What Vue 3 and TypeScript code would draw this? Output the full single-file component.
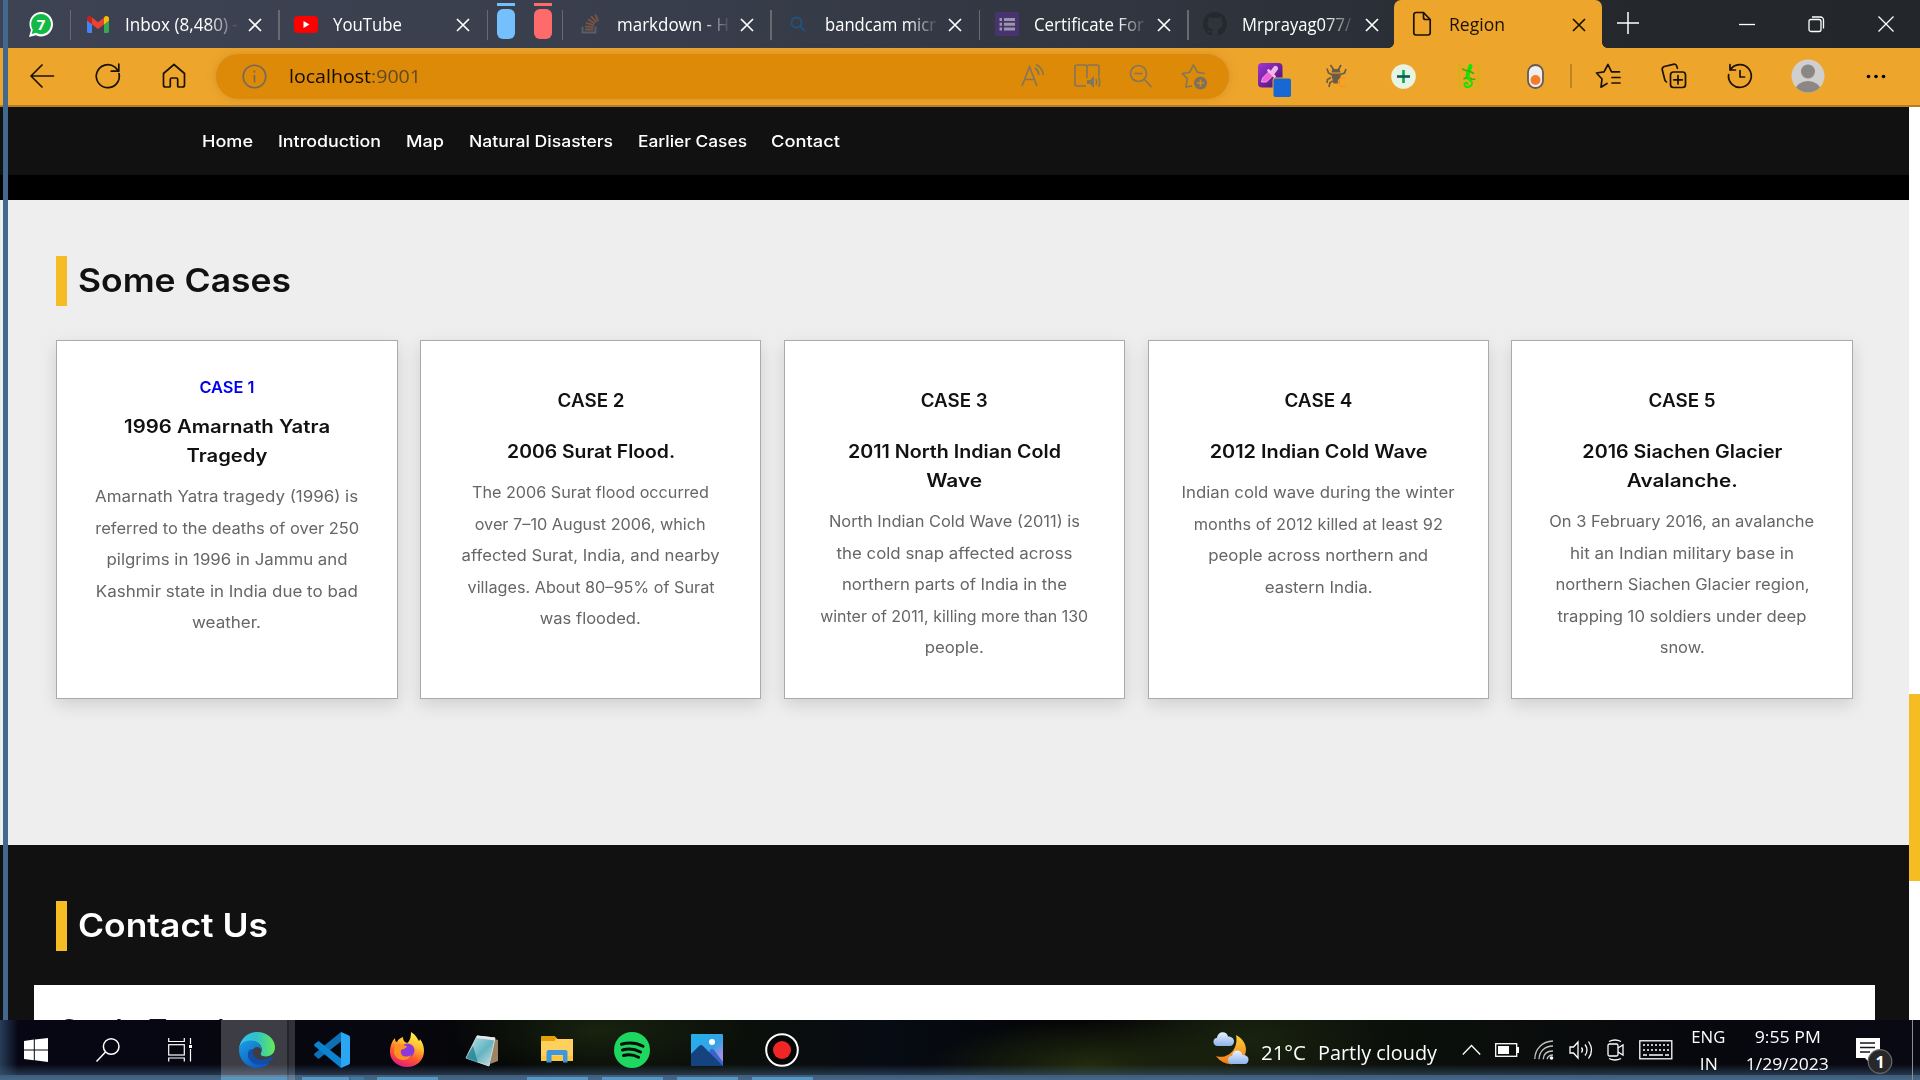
<script setup lang="ts">
import type { Directive } from 'vue'

interface Line { t: string; w: number }
interface Case { label: Line; title: Line[]; body: Line[]; link?: boolean }
interface Tab { icon: string; text: string; w: number; active?: boolean }

const l = (t: string, w: number): Line => ({ t, w })

const vFit: Directive<HTMLElement, number> = {
  mounted(el, { value }) {
    const natural = el.getBoundingClientRect().width
    if (natural > 0) el.style.transform = `scaleX(${value / natural})`
  },
}

const firstTabs: Tab[] = [
  { icon: 'gmail', text: 'Inbox (8,480) -', w: 113 },
  { icon: 'youtube', text: 'YouTube', w: 69 },
]
const moreTabs: Tab[] = [
  { icon: 'stack', text: 'markdown - H', w: 112 },
  { icon: 'search', text: 'bandcam micr', w: 111 },
  { icon: 'forms', text: 'Certificate For', w: 110 },
  { icon: 'github', text: 'Mrprayag077/', w: 109 },
  { icon: 'page', text: 'Region', w: 56, active: true },
]

const nav: Line[] = [
  l('Home', 51), l('Introduction', 103), l('Map', 38),
  l('Natural Disasters', 144), l('Earlier Cases', 109), l('Contact', 69),
]

const cases: Case[] = [
  {
    link: true,
    label: l('CASE 1', 55),
    title: [l('1996 Amarnath Yatra', 206), l('Tragedy', 81)],
    body: [l('Amarnath Yatra tragedy (1996) is', 263), l('referred to the deaths of over 250', 264), l('pilgrims in 1996 in Jammu and', 241), l('Kashmir state in India due to bad', 262), l('weather.', 69)],
  },
  {
    label: l('CASE 2', 67),
    title: [l('2006 Surat Flood.', 168)],
    body: [l('The 2006 Surat flood occurred', 237), l('over 7–10 August 2006, which', 231), l('affected Surat, India, and nearby', 258), l('villages. About 80–95% of Surat', 247), l('was flooded.', 101)],
  },
  {
    label: l('CASE 3', 67),
    title: [l('2011 North Indian Cold', 213), l('Wave', 56)],
    body: [l('North Indian Cold Wave (2011) is', 251), l('the cold snap affected across', 236), l('northern parts of India in the', 225), l('winter of 2011, killing more than 130', 268), l('people.', 59)],
  },
  {
    label: l('CASE 4', 68),
    title: [l('2012 Indian Cold Wave', 218)],
    body: [l('Indian cold wave during the winter', 273), l('months of 2012 killed at least 92', 249), l('people across northern and', 220), l('eastern India.', 108)],
  },
  {
    label: l('CASE 5', 67),
    title: [l('2016 Siachen Glacier', 200), l('Avalanche.', 111)],
    body: [l('On 3 February 2016, an avalanche', 265), l('hit an Indian military base in', 224), l('northern Siachen Glacier region,', 254), l('trapping 10 soldiers under deep', 249), l('snow.', 45)],
  },
]
</script>

<template>
  <div class="screen">
    <header class="tabs">
      <div class="pinned">
        <svg width="24" height="25" viewBox="0 0 24 25">
          <path d="M12 0C5.500 0 0.500 5.200 0.500 12c0 2.200.5 4.200 1.500 6L0 25l7-1.800c1.500.8 3.200 1.200 5 1.200 6.700 0 12-5.400 12-12.200S18.700 0 12 0z" fill="#fff" />
          <path d="M12 2C6.500 2 2.200 6.500 2.200 12.200c0 2 .6 3.900 1.600 5.500L2.600 22l4.600-1.200c1.400.9 3.100 1.400 4.900 1.400 5.600 0 9.900-4.500 9.900-10.100S17.600 2 12 2z" fill="#12b944" />
          <text x="12" y="18" class="wa">7</text>
        </svg>
      </div>
      <template v-for="(group, gi) in [firstTabs, moreTabs]" :key="gi">
        <div v-if="gi === 1" class="groups"><i class="g blue"></i><i class="g red"></i></div>
        <div v-for="tab in group" :key="tab.text" class="tab" :class="{ active: tab.active }">
          <div class="tab-icon">
            <svg v-if="tab.icon === 'gmail'" width="22" height="17" viewBox="0 0 22 17">
              <path d="M0 3v12.500c0 .8.600 1.500 1.500 1.500H5V7z" fill="#4285f4" /><path d="M22 3v12.500c0 .8-.6 1.500-1.500 1.500H17V7z" fill="#34a853" />
              <path d="M17 2v6.500l5-4V2.500C22 .3 19.500-.8 17.700.6z" fill="#fbbc04" /><path d="M5 8.500V1.500l6 4.800 6-4.800v7L11 13z" fill="#ea4335" /><path d="M0 2.500v2l5 4v-7L4.300.6C2.500-.8 0 .3 0 2.500z" fill="#c5221f" />
            </svg>
            <svg v-else-if="tab.icon === 'youtube'" width="24" height="17" viewBox="0 0 24 17"><rect width="24" height="17" rx="4" fill="#f00" /><path d="M9.500 5v7l6-3.500z" fill="#fff" /></svg>
            <svg v-else-if="tab.icon === 'stack'" width="20" height="20" viewBox="0 0 20 20" fill="none" stroke-width="1.800">
              <path d="M2.500 12.500v6h13v-6" stroke="#5a6069" /><path d="M5 15.500h8.500M5.200 12.300l8.300.9M6 8.800l8 2.300M8 5.200l7 4.200M11 2.200l5.500 6M15.200.5l3 6.500" stroke="#7c5440" />
            </svg>
            <svg v-else-if="tab.icon === 'search'" width="16" height="16" viewBox="0 0 16 16" fill="none" stroke="#23527c" stroke-width="2"><circle cx="6.500" cy="6.500" r="5" /><path d="M10 10l5 5" /></svg>
            <svg v-else-if="tab.icon === 'forms'" width="24" height="24" viewBox="0 0 24 24"><rect width="24" height="24" rx="1.500" fill="#47346f" /><path d="M4.500 6h2.500v3H4.500zM9 6h11v3H9zM4.500 10.700h2.500v3H4.500zM9 10.700h11v3H9zM4.500 15.400h2.500v3H4.500zM9 15.400h11v3H9z" fill="#9d96aa" /></svg>
            <svg v-else-if="tab.icon === 'github'" width="24" height="24" viewBox="0 0 16 16"><path fill="#24292e" d="M8 0C3.580 0 0 3.580 0 8c0 3.540 2.290 6.530 5.470 7.590.4.070.55-.17.55-.38 0-.19-.01-.82-.01-1.490-2.010.37-2.530-.49-2.690-.94-.09-.23-.48-.94-.82-1.130-.28-.15-.68-.52-.01-.53.63-.01 1.080.58 1.230.82.720 1.210 1.870.87 2.330.66.070-.52.280-.87.510-1.070-1.780-.2-3.640-.89-3.640-3.950 0-.87.310-1.590.82-2.150-.08-.2-.36-1.020.080-2.120 0 0 .67-.21 2.200.82.640-.18 1.320-.27 2-.27s1.360.090 2 .27c1.530-1.040 2.200-.82 2.200-.82.440 1.100.16 1.920.080 2.120.510.560.82 1.270.82 2.150 0 3.070-1.870 3.750-3.650 3.950.290.250.540.730.540 1.480 0 1.070-.01 1.930-.01 2.200 0 .210.150.460.550.380A8.010 8.010 0 0 0 16 8c0-4.420-3.580-8-8-8z" /></svg>
            <svg v-else width="20" height="26" viewBox="0 0 20 26" fill="none" stroke="#1a1205" stroke-width="1.700"><path d="M11.500 1.500H4A2.200 2.200 0 0 0 1.800 3.700v18.100A2.200 2.200 0 0 0 4 24h12a2.200 2.200 0 0 0 2.200-2.200V8.500zM11.500 1.500v5a2 2 0 0 0 2 2h4.700" /></svg>
          </div>
          <div class="tab-text" :class="{ faded: tab.w > 100 }"><span v-fit="tab.w">{{ tab.text }}</span></div>
          <svg class="x" width="14" height="14" viewBox="0 0 14 14"><path d="M1 1l12 12M13 1L1 13" stroke="currentColor" stroke-width="1.700" /></svg>
        </div>
      </template>
      <svg class="plus" width="22" height="22" viewBox="0 0 22 22"><path d="M11 0v22M0 11h22" stroke="#fff" stroke-width="1.500" /></svg>
      <div class="winctl">
        <svg width="16" height="16"><path d="M0 8.500h16" stroke="#fff" stroke-width="1.300" /></svg>
        <svg width="17" height="17" fill="none" stroke="#fff" stroke-width="1.300"><rect x="1" y="3.500" width="12" height="12" rx="2" /><path d="M4 1h8.500a3 3 0 0 1 3 3v8.500" /></svg>
        <svg width="16" height="16"><path d="M.5.5l15 15M15.500.5l-15 15" stroke="#fff" stroke-width="1.300" /></svg>
      </div>
    </header>

    <div class="toolbar">
      <div class="cell"><svg width="24" height="24" viewBox="0 0 24 24" class="ln"><path d="M23.500 12H1M12 1L1 12l11 11" /></svg></div>
      <div class="cell"><svg width="26" height="26" viewBox="0 0 26 26" class="ln"><path d="M24 10.500A11.500 11.500 0 1 1 20 4.200L23.500 8M23.800 1v7.200h-7.500" /></svg></div>
      <div class="cell"><svg width="24" height="26" viewBox="0 0 24 26" class="ln"><path d="M1.500 10.500L12 1.500l10.500 9V22a2 2 0 0 1-2 2h-3.800a1 1 0 0 1-1-1v-6.500a1.500 1.500 0 0 0-1.500-1.500h-4.400a1.500 1.500 0 0 0-1.500 1.500V23a1 1 0 0 1-1 1H3.500a2 2 0 0 1-2-2z" /></svg></div>
      <div class="address">
        <svg width="25" height="25" viewBox="0 0 25 25" fill="none" stroke="#75695a" stroke-width="1.600"><circle cx="12.500" cy="12.500" r="11.300" /><path d="M12.500 11v7.500M12.500 6.500v2" /></svg>
        <div class="url"><span v-fit="132">localhost<em>:9001</em></span></div>
        <div class="addr-icons">
          <svg width="26" height="26" viewBox="0 0 26 26" class="ag"><path d="M2 23L9.500 4 17 23M4.800 16.500h9.500M15 5c2.300 1.500 3.500 3.500 4 7M16 1.500c4.500 2.200 6.800 5.500 7.500 10.500" /></svg>
          <svg width="27" height="26" viewBox="0 0 27 26" class="ag"><path d="M12 23H3a2 2 0 0 1-2-2V4a2 2 0 0 1 2-2h8a2 2 0 0 1 2 2v11M13 4a2 2 0 0 1 2-2h8a2 2 0 0 1 2 2v9" /><path d="M13 17h3l4-4v12l-4-4h-3z" fill="#81765c" stroke="none" /><path d="M22 16q1.500 3 0 6M24.500 14q2.500 5 0 10" /></svg>
          <svg width="24" height="24" viewBox="0 0 24 24" class="ag"><circle cx="9.500" cy="9.500" r="8" /><path d="M15.500 15.500L22.500 23M5.500 9.500h8" /></svg>
          <svg width="27" height="27" viewBox="0 0 27 27" class="ag"><path d="M11 23l-6 1 1.200-8.200L1.500 10.500 8.700 9.200 12.500 2l3.800 7.200 7.500 1.300" /><circle cx="19.500" cy="20" r="6.500" fill="#7b715e" stroke="none" /><path d="M19.500 16.500v7M16 20h7" stroke="#dc8a08" /></svg>
        </div>
      </div>
      <div class="exts">
        <div class="cell first"><svg width="34" height="34" viewBox="0 0 34 34"><defs><linearGradient id="pp" x2="1" y2="1"><stop stop-color="#a233d8" /><stop offset="1" stop-color="#42146b" /></linearGradient></defs><rect x="0" y="0" width="24.500" height="24.500" rx="4" fill="url(#pp)" /><path d="M3.500 19l1-4 7-7 4 4-7 7z" fill="#f25fd8" stroke="#f59be6" stroke-width="1" /><path d="M10.500 7.500l6 6" stroke="#f9c3f0" stroke-width="2.600" stroke-linecap="round" /><path d="M14.500 9.500l3-4" stroke="#f3b5ea" stroke-width="5" stroke-linecap="round" /><rect x="14.500" y="14.500" width="19.500" height="20" rx="3" fill="#eea52c" /><rect x="15.500" y="15.500" width="17.500" height="18.500" rx="2" fill="#1767d5" /></svg></div>
        <div class="cell"><svg width="22" height="24" viewBox="0 0 22 24" fill="none" stroke="#6b5c48" stroke-width="1.700"><path d="M6.500 5h7l1 3.500h-9z" fill="#6b5c48" stroke="none" /><path d="M5 9.500h10l-1.500 10h-6z" fill="#6b5c48" stroke="none" /><path d="M7.500 5.500L4.500 1M12.500 5.500L15 1M5.500 10.500L2.500 9 1 4.500M14.500 10.500L18.500 9l1.500-4M5 13.500l-3.500 2L1 19M7 17l-3 1.500L3 23" /><path d="M19.500 15a4.200 4.200 0 1 0 0 6.500" stroke="#fb971e" stroke-width="2" /></svg></div>
        <div class="cell"><svg width="25" height="25" viewBox="0 0 25 25"><circle cx="12.500" cy="12.500" r="12.300" fill="#e7f3e3" /><path d="M12.500 6v13" stroke="#06a562" stroke-width="2.600" /><path d="M6 12.500h13" stroke="#0a5a55" stroke-width="2.600" /></svg></div>
        <div class="cell"><svg width="24" height="25" viewBox="0 0 24 25" fill="none"><path d="M5 1H2.500v9L1 12.500 2.500 15v9H5M19 1h2.500v9l1.500 2.500-1.500 2.500v9H19" stroke="#c8bc00" stroke-width="1.200" /><path d="M13.500 2l-1 3" stroke="#12e500" stroke-width="4" stroke-linecap="round" /><path d="M12 6.500c-1.800 3-1 4-1.500 7" stroke="#12e500" stroke-width="4" stroke-linecap="round" /><path d="M10.500 13.500c0 2.200 4.500 2.500 4.500 5.500 0 4.500-7.500 5.500-7.500 1.500 0-1.800 3-2.500 3.200-.5" stroke="#12e500" stroke-width="2" stroke-linecap="round" /><path d="M5 5l4 1.500 3 .5 5 2.500M6.500 15l3-1.500M13 13.500l2 2 3.500-.5" stroke="#3eae00" stroke-width="1.500" /></svg></div>
        <div class="cell"><svg width="17" height="25" viewBox="0 0 17 25"><rect x="1" y="1" width="15" height="23" rx="7.500" fill="#f1efed" stroke="#625a57" stroke-width="1.800" /><circle cx="8.500" cy="16" r="5" fill="#f47c2c" /></svg></div>
        <i class="vsep"></i>
        <div class="cell"><svg width="26" height="26" viewBox="0 0 26 26" class="ln"><path d="M12 20.500L6 24.200 7 16 1.500 10l7.500-1.200L13 1.500l3.500 7.300h8M17 14.500h8M17 20h8" /></svg></div>
        <div class="cell"><svg width="26" height="26" viewBox="0 0 26 26" class="ln"><rect x="9.500" y="9" width="15" height="15.500" rx="3" /><path d="M17 12.500v8.500M12.700 16.800h8.600M5.500 19L4 17.500 1.300 7c-.4-1.700.3-3 2-3.500l9-2.200c1.800-.4 3 .3 3.500 2l.6 2" /></svg></div>
        <div class="cell"><svg width="26" height="26" viewBox="0 0 26 26" class="ln"><path d="M3 1.500V7h5.500M3.200 7A11.400 11.400 0 1 1 1.600 11.500M13 7.500V14h4.500" /></svg></div>
        <div class="cell avatar"><svg width="34" height="34" viewBox="0 0 34 34"><clipPath id="av"><circle cx="17" cy="17" r="16.500" /></clipPath><g clip-path="url(#av)"><rect width="34" height="34" fill="#d1cfcd" /><circle cx="17" cy="12.500" r="7" fill="#8a8785" /><ellipse cx="17" cy="31" rx="12.500" ry="9" fill="#8a8785" /></g></svg></div>
        <div class="cell"><svg width="20" height="5"><circle cx="2.500" cy="2.500" r="1.800" /><circle cx="10" cy="2.500" r="1.800" /><circle cx="17.500" cy="2.500" r="1.800" /></svg></div>
      </div>
    </div>

    <div class="viewport">
      <main class="page">
        <nav class="nav"><span v-for="n in nav" :key="n.t" class="slot" :style="{ width: n.w + 'px' }"><span v-fit="n.w" class="left">{{ n.t }}</span></span></nav>
        <div class="strip"></div>
        <section class="cases">
          <h2><span v-fit="213" class="left">Some Cases</span></h2>
          <div class="cards">
            <article v-for="c in cases" :key="c.label.t" class="card" :class="{ link: c.link }">
              <div class="label"><span v-fit="c.label.w">{{ c.label.t }}</span></div>
              <h3><div v-for="t in c.title" :key="t.t"><span v-fit="t.w">{{ t.t }}</span></div></h3>
              <p><span v-for="b in c.body" :key="b.t" class="row"><span v-fit="b.w">{{ b.t }}</span></span></p>
            </article>
          </div>
        </section>
        <section class="contact">
          <h2><span v-fit="190" class="left">Contact Us</span></h2>
          <div class="form"><h4><span v-fit="177" class="left">Get In Touch</span></h4></div>
        </section>
      </main>
      <div class="scrollbar"><i></i></div>
    </div>

    <footer class="taskbar">
      <div class="sys">
        <div><svg width="24" height="24" viewBox="0 0 24 24" fill="#fff"><path d="M0 3l9.800-1.400v9.800H0zM10.800 1.400L24 0v11.400H10.800zM0 12.400h9.800v9.900L0 21zM10.800 12.400H24V24l-13.200-1.700z" /></svg></div>
        <div><svg width="24" height="24" viewBox="0 0 24 24" fill="none" stroke="#fff" stroke-width="1.500"><circle cx="15.200" cy="8.500" r="7.800" /><path d="M9.500 14L.5 23.500" /></svg></div>
        <div><svg width="24" height="24" viewBox="0 0 24 24" fill="none" stroke="#fff" stroke-width="1.200"><path d="M.7 0v3.500h15.600V0M.7 23.500v-3.500h15.600v3.500M22.500 0v6M22.500 11v12.500" /><rect x=".7" y="6.700" width="15.600" height="10.300" /><path d="M21 8.500h3" stroke-width="3" /></svg></div>
      </div>
      <div class="app on"><svg width="36" height="36" viewBox="0 0 36 36"><defs><linearGradient id="e1" x2="1"><stop stop-color="#35c1f1" /><stop offset=".5" stop-color="#2fc2c8" /><stop offset="1" stop-color="#66eb54" /></linearGradient><linearGradient id="e2" x2=".7" y2="1"><stop stop-color="#1b9de2" /><stop offset="1" stop-color="#0c59c0" /></linearGradient></defs>
        <path d="M0 17C1 7 8.500 0 18 0c10.500 0 18 7.500 18 15 0 6-4 9.500-9 9.500-4.500 0-6-1.700-5-3.500 2-3.500.5-11-9-12C7 8.400 2 11.500 0 17z" fill="url(#e1)" /><path d="M0 18c0-6 5.500-9.500 11-9.500 7 0 11.300 4.200 11.300 9-4-5-9.500-1.500-9.500 4 0 8 10 12.500 18.200 9C28 34 23.500 36 18 36 8 36 0 28 0 18z" fill="url(#e2)" /><path d="M14 17c-2 10 8 14 19 7.500 1-.5 1.500.2 1 1C27 38 7 33 9 21c.5-2.500 2.500-4 5-4z" fill="#124ea5" /></svg></div>
      <div class="app multi"><svg width="36" height="36" viewBox="0 0 36 36"><path d="M27 0v9.500L4.500 27 .5 23.500q-.8-1 0-2z" fill="#0e6fb5" /><path d="M4.500 9L27 26.500V36L.5 14q-.8-1 0-2z" fill="#0b83d1" /><path d="M27 0l7.500 3.300q1.500.7 1.500 2V30.700q0 1.300-1.500 2L27 36z" fill="#29a7f3" /></svg></div>
      <div class="app"><svg width="36" height="36" viewBox="0 0 36 36"><defs><linearGradient id="ff" x1=".7" y1="0" x2=".3" y2="1"><stop stop-color="#fff44f" /><stop offset=".35" stop-color="#ffbd2e" /><stop offset=".65" stop-color="#ff5c2b" /><stop offset="1" stop-color="#e31587" /></linearGradient></defs><path d="M22 0c5 3 6 6 8 9 1-1 1-2 1-2 3 4 4 8 4 12 0 9-7 16-17 16S1 28 1 20C1 14 3 9 6 6c0 3 1 4 2 4 1-3 4-4 6-5 0 4 2 5 4 6 3-2 4-6 4-11z" fill="url(#ff)" /><circle cx="18.500" cy="18.500" r="7" fill="#8b39dd" /><path d="M6 13c5-2 9 1 12 1-1 3-4 3-6 4-2 7 6 8 10 5-3 8-15 6-17-2z" fill="#ff9220" /></svg></div>
      <div class="app idle"><svg width="34" height="34" viewBox="0 0 34 34"><defs><linearGradient id="np" x2="1" y2="1"><stop stop-color="#c5e9ec" /><stop offset=".55" stop-color="#63b4c2" /><stop offset="1" stop-color="#d9e3e5" /></linearGradient></defs><path d="M29 6l4 1v21l-8 3z" fill="#9d8462" /><path d="M12 3l18 2-6 28L1 25z" fill="url(#np)" stroke="#d5dde0" /><path d="M12 2.500l18 2v3L12 5z" fill="#e8e8e8" /><path d="M1 25l7-12 5 17z" fill="#167b8f" opacity=".7" /></svg></div>
      <div class="app"><svg width="32" height="28" viewBox="0 0 32 28"><path d="M0 1.500A1.500 1.500 0 0 1 1.500 0h12l3 3H32v22H0z" fill="#ffd15c" /><path d="M0 1.500A1.500 1.500 0 0 1 1.500 0h12l2 2-2 3H0z" fill="#e3a008" /><path d="M0 20h32v5H0z" fill="#fcc63f" /><path d="M5.500 26.500V16a2 2 0 0 1 2-2h17a2 2 0 0 1 2 2v10.500H22V19H10.500v7.500z" fill="#3e97dc" /></svg></div>
      <div class="app"><svg width="36" height="36" viewBox="0 0 36 36"><circle cx="18" cy="18" r="18" fill="#1ed760" /><path d="M7.500 12.300c7-2 15-1.500 21.500 2M8.500 18c6-1.600 12.500-1 18 2M9.500 23.500c5-1.200 10.500-.7 15 1.800" fill="none" stroke="#070d08" stroke-width="3" stroke-linecap="round" /></svg></div>
      <div class="app"><svg width="32" height="32" viewBox="0 0 32 32"><defs><linearGradient id="ph" x2="1" y2="1"><stop stop-color="#22b1ec" /><stop offset=".55" stop-color="#35a2e6" /><stop offset=".8" stop-color="#9e91e6" /></linearGradient></defs><rect width="32" height="32" rx="1" fill="url(#ph)" /><path d="M13 32l6-16q2-2 4 0l9 12v4z" fill="#3b63cb" /><path d="M0 20l8-8q2-2 4 0l20 20H0z" fill="#15437f" /><circle cx="21" cy="8" r="3" fill="#fff" /></svg></div>
      <div class="app"><svg width="34" height="34" viewBox="0 0 34 34"><circle cx="17" cy="17" r="15.800" fill="#050505" stroke="#fff" stroke-width="2" /><circle cx="17" cy="17" r="9" fill="#f02626" /></svg></div>

      <div class="weather">
        <svg width="36" height="34" viewBox="0 0 36 34"><defs><linearGradient id="mo" x2="0" y2="1"><stop stop-color="#ffd03a" /><stop offset="1" stop-color="#f27a15" /></linearGradient><linearGradient id="cl" x2="0" y2="1"><stop stop-color="#e9f2fe" /><stop offset="1" stop-color="#8cb2ee" /></linearGradient></defs><path d="M23 3c8 4 12 12 9 20-4 11-20 13-29 1 12 4 23-7 20-21z" fill="url(#mo)" /><path d="M4 14a4.200 4.200 0 0 1 0-8.300C5-1.500 14-1.500 15 4.500c4 0 6 2.500 6 5S19 14 17 14z" fill="url(#cl)" /><path d="M19 32a4 4 0 0 1 0-8c1-7 9-7 10.500-1 4 0 6 2 6 4.500S34 32 32 32z" fill="url(#cl)" /></svg>
        <div class="deg"><span v-fit="45" class="left">21°C</span></div>
        <div class="cond"><span v-fit="119" class="left">Partly cloudy</span></div>
      </div>
      <div class="tray">
        <svg width="19" height="12" viewBox="0 0 19 12" class="tl"><path d="M.8 10.500L9.500 1.500l8.700 9" /></svg>
        <svg width="24" height="14" viewBox="0 0 24 14" class="tl"><rect x=".7" y=".7" width="21" height="12.600" /><rect x="3" y="3" width="11" height="8" fill="#fff" stroke="none" /><path d="M23 4v6" stroke-width="2" /></svg>
        <svg width="20" height="20" viewBox="0 0 20 20" class="tl"><path d="M.8 19C1 9 8 1.500 19 1M5 19.300C5.300 11.500 10.500 6.200 19 6M9.200 19.300c.2-5 3.800-8.200 9.800-8.300M13.200 19.300c0-2.500 2.300-4.300 5.800-4.300" opacity=".75" /><circle cx="17.500" cy="18" r="1.800" fill="#fff" stroke="none" /></svg>
        <svg width="24" height="20" viewBox="0 0 24 20" class="tl"><path d="M1 7h3.500L9 2v16l-4.500-5H1zM12.500 7.500q2 2.500 0 5M16 4.500q4 5.500 0 11M19.500 1.500q6 8.500 0 17" /></svg>
        <svg width="17" height="22" viewBox="0 0 17 22" class="tl"><rect x="1" y="5" width="10" height="12" rx="1.500" /><path d="M11 9l5-3v10l-5-3M2 2.500q6-3 12 0M2 19.500q6 3 12 0" /></svg>
        <svg width="34" height="20" viewBox="0 0 34 20" class="tl"><rect x=".8" y=".8" width="32" height="18" /><path d="M4 5h26M4 10h26" stroke-dasharray="2 2" /><path d="M4 15h4M10 15h14M26 15h4" /></svg>
      </div>
      <div class="lang"><div><span v-fit="34">ENG</span></div><div><span v-fit="18">IN</span></div></div>
      <div class="clock"><div><span v-fit="66">9:55 PM</span></div><div><span v-fit="83">1/29/2023</span></div></div>
      <div class="notif"><svg width="38" height="38" viewBox="0 0 38 38"><path d="M1 1h24v20H16v6l-6-6H1z" fill="#fff" /><path d="M5 6h15M5 10.500h15M5 15h10" stroke="#16161c" stroke-width="1.500" /><circle cx="25" cy="24.500" r="11.800" fill="#28282b" stroke="#6b6b6d" stroke-width="1.200" /><text x="25" y="30.500" class="badge">1</text></svg></div>
      <i class="peek"></i>
    </footer>
    <i class="window-edge"></i>
  </div>
</template>

<style>
body { margin: 0; overflow: hidden; }
</style>

<style scoped>
.screen { position: relative; width: 1920px; height: 1080px; overflow: hidden; display: flex; flex-direction: column; font-family: "Open Sans", "Noto Sans", sans-serif; }
.screen span { display: inline-block; white-space: nowrap; }
svg { display: block; flex: none; overflow: visible; }
.left { transform-origin: left center; }

.tabs { height: 48px; flex: none; display: flex; align-items: stretch; background: linear-gradient(90deg, #3d4352 0, #393f4d 30%, #30353f 60%, #24272c 85%, #23272b 100%); }
.pinned { width: 40.500px; padding-left: 29px; display: flex; align-items: center; }
.wa { font: bold 15px "Open Sans", sans-serif; fill: #fff; text-anchor: middle; }
.tab { position: relative; width: 208.500px; box-sizing: border-box; display: flex; align-items: center; color: #fff; padding-left: 16px; }
.tab::before, .groups::before { content: ""; position: absolute; left: 0; top: 10px; width: 1.500px; height: 30px; background: #686a6d; }
.tab.active { width: 208px; margin-left: -2px; background: #eea52c; color: #1b1204; border-radius: 7px 7px 0 0; }
.tab.active::before, .tab.active::after { content: ""; position: absolute; left: -5px; top: auto; bottom: 0; width: 5px; height: 5px; background: radial-gradient(circle at 0 0, transparent 4.500px, #eea52c 5px); }
.tab.active::after { left: auto; right: -5px; background: radial-gradient(circle at 100% 0, transparent 4.500px, #eea52c 5px); }
.tab-icon { width: 24px; display: flex; justify-content: center; }
.tab-text { width: 112px; margin: -1px 0 0 15px; font-size: 18px; line-height: 26px; overflow: hidden; }
.tab-text.faded { mask-image: linear-gradient(90deg, #000 74%, rgba(0, 0, 0, .08)); }
.tab-text span { transform-origin: left center; }
.x { margin: 1px 0 0 11px; }
.groups { position: relative; width: 75px; box-sizing: border-box; padding: 9px 0 0 10px; display: flex; gap: 19px; }
.g { position: relative; width: 18px; height: 30px; border-radius: 6px; }
.g::before { content: ""; position: absolute; left: 0; top: -6px; width: 18px; height: 3px; background: inherit; }
.blue { background: #74c0fc; }
.red { background: #ff6b6b; }
.plus { margin: 12px 0 0 15.500px; }
.winctl { margin-left: auto; padding-right: 26px; display: flex; align-items: center; gap: 53px; }

.toolbar { height: 59px; box-sizing: border-box; flex: none; display: flex; align-items: center; padding: 0 9px 1px 9px; background: #eea52c; border-bottom: 2px solid #b57e22; }
.cell { width: 66px; display: flex; justify-content: center; flex: none; }
.cell.first { width: 62px; }
.cell.first svg { margin: 8px 0 0 3px; }
.cell.avatar { width: 70px; }
.ln { fill: none; stroke: #1a1205; stroke-width: 1.700; stroke-linejoin: round; stroke-linecap: round; }
.ag { fill: none; stroke: #81765c; stroke-width: 1.600; }
.address { width: 1013px; height: 45px; box-sizing: border-box; margin: 0 0 0 9px; padding: 0 21px 0 26px; border-radius: 23px; background: #dc8a08; box-shadow: 0 0 8px rgba(190, 125, 40, .5); display: flex; align-items: center; }
.url { margin-left: 22px; font-size: 19px; line-height: 30px; color: #140d01; }
.url span { transform-origin: left center; }
.url em { font-style: normal; color: #624a20; }
.addr-icons { margin-left: auto; display: flex; gap: 28px; align-items: center; }
.exts { display: flex; align-items: center; margin-left: 13px; }
.vsep { width: 2px; height: 24px; margin: 0 3px 0 2px; background: #bd8524; }

.viewport { flex: 1; min-height: 0; display: flex; background: #fff; overflow: hidden; }
.page { width: 1909px; height: 913px; overflow: hidden; font-family: Inter, "Liberation Sans", sans-serif; }
.nav { height: 68px; display: flex; align-items: center; gap: 24.900px; padding-left: 202px; background: #111; color: #fff; font-size: 16px; font-weight: 500; line-height: 24px; }
.slot { height: 24px; }
.strip { height: 25px; background: #000; }
.cases { height: 645px; box-sizing: border-box; padding: 56px 56px 0; background: #eee; }
h2 { margin: 0; height: 50px; line-height: 49px; padding-left: 11px; border-left: 11px solid #f5bd23; font-size: 33px; font-weight: 600; color: #111; }
.cards { display: grid; grid-template-columns: repeat(5, 341.600px); column-gap: 22.250px; margin-top: 34px; }
.card { box-sizing: border-box; height: 359px; border: 1px solid #aaa; padding-top: 48px; background: #fff; text-align: center; box-shadow: 0 6px 16px rgba(0, 0, 0, .13); }
.label { height: 24px; line-height: 24px; margin-bottom: 24px; font-size: 18px; font-weight: 600; color: #111; }
h3 { margin: 0 0 11px; font-size: 18px; line-height: 29px; font-weight: 600; color: #111; }
h3 div { height: 29px; }
p { margin: 0; font-size: 15.500px; color: #666; }
.screen .row { display: block; height: 31.500px; line-height: 31.500px; }
.card.link { padding-top: 34px; }
.link .label { color: #00e; font-size: 16px; margin-bottom: 13px; }
.contact { height: 175px; box-sizing: border-box; padding: 56px 34px 0; background: #111; }
.contact h2 { color: #fff; margin-left: 22px; }
.form { margin-top: 34px; height: 60px; box-sizing: border-box; background: #fff; padding: 27px 0 0 24px; }
h4 { margin: 0; font-size: 29px; line-height: 36px; font-weight: 500; color: #111; }
.scrollbar { flex: 1; background: #fff; padding-top: 587px; }
.scrollbar i { display: block; height: 187px; background: #f5bd23; }

.taskbar { height: 60px; flex: none; display: flex; align-items: stretch; color: #fff; background:
  linear-gradient(180deg, transparent 74%, rgba(62, 91, 121, .55) 91%, #3f5c79 92%, #456889 100%),
  linear-gradient(90deg, #263d58 0, rgba(38, 61, 88, 0) 18px),
  radial-gradient(ellipse 150px 50px at 600px 10px, #18230f, transparent),
  radial-gradient(ellipse 160px 45px at 1090px 45px, #222b0e, transparent),
  radial-gradient(ellipse 130px 55px at 1250px 20px, #19220f, transparent),
  linear-gradient(90deg, #070715 0, #07070f 20%, #050606 27%, #0b0f0a 38%, #070b13 46%, #040507 56%, #10150b 64%, #0b0f0b 75%, #07080d 88%, #090914 100%); }
.sys { display: flex; width: 219.500px; }
.sys div { width: 72px; display: flex; align-items: center; justify-content: center; }
.app { position: relative; width: 75px; display: flex; align-items: center; justify-content: center; flex: none; }
.app::after { content: ""; position: absolute; left: 7px; right: 7px; bottom: 0; height: 3px; background: #5896c4; }
.app.on::before { content: ""; position: absolute; left: 1.500px; right: 0; top: 0; bottom: 0; background: linear-gradient(90deg, rgba(255, 255, 255, .22) 66px, rgba(255, 255, 255, .12) 66px 68px, rgba(255, 255, 255, .17) 68px); }
.app.on svg { position: relative; }
.app.on::after { left: 1.500px; width: 66px; right: auto; }
.app.multi::after { right: 6px; background: linear-gradient(90deg, #5896c4 47px, #456889 47px 49px, #4479a5 49px); }
.app.idle::after { display: none; }
.weather { margin-left: 393px; display: flex; align-items: center; font-size: 20px; line-height: 28px; padding-bottom: 3px; }
.deg { width: 45px; margin: 9px 0 0 12px; }
.cond { width: 119px; margin: 9px 0 0 12px; }
.tray { display: flex; align-items: center; gap: 14.700px; margin-left: 25px; }
.tl { fill: none; stroke: #fff; stroke-width: 1.300; }
.lang, .clock { text-align: center; font-size: 17px; line-height: 27px; padding-top: 3px; }
.lang { width: 36px; margin-left: 17.500px; }
.clock { width: 86px; margin-left: 18px; }
.clock span, .lang span { transform-origin: center; }
.notif { margin-left: 25px; padding-top: 17px; }
.badge { font: bold 16px "Open Sans", sans-serif; fill: #fff; text-anchor: middle; }
.peek { margin-left: auto; margin-right: 7px; width: 1px; background: #8a8d92; }
.window-edge { position: absolute; left: 3px; top: 0; width: 5px; height: 1020px; background: #42688f; }
</style>
